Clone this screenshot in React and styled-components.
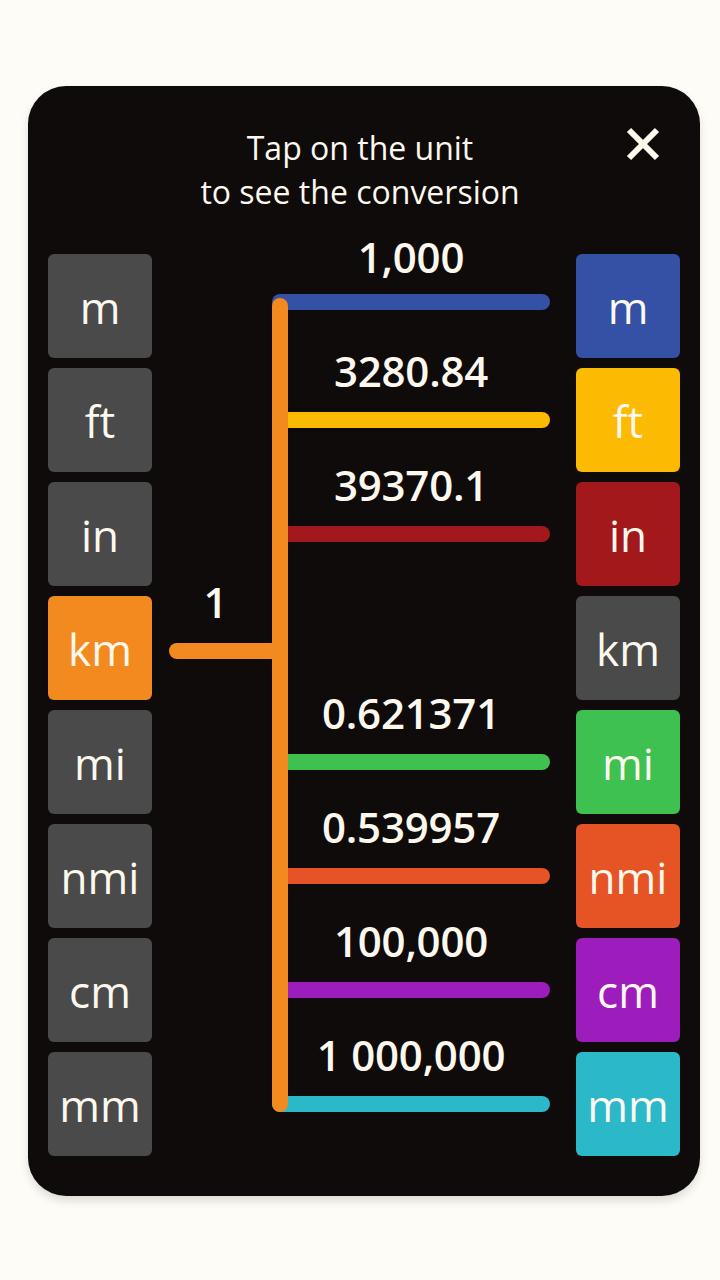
import React from "react";
import styled, { createGlobalStyle } from "styled-components";

const Global = createGlobalStyle`
  html, body { margin: 0; padding: 0; background: #fdfcf7; }
  body { font-family: "Open Sans", "Noto Sans", sans-serif; }
  * { box-sizing: border-box; }
`;

const Page = styled.div`
  width: 720px;
  min-height: 1280px;
  padding: 86px 20px 0 28px;
`;

const Card = styled.div`
  background: #0e0b0a;
  border-radius: 38px;
  padding: 40px 20px 40px;
  box-shadow: 0 5px 8px rgba(0, 0, 0, 0.13);
  color: #fdf8ee;
`;

const Header = styled.div`
  display: grid;
  grid-template-columns: 1fr auto 1fr;
  align-items: start;
  padding-right: 8px;
`;

const Title = styled.div`
  grid-column: 2;
  font-size: 32px;
  line-height: 44px;
  text-align: center;
  font-weight: 400;
`;

const Close = styled.button`
  grid-column: 3;
  justify-self: end;
  margin: 1px 12px 0 0;
  width: 34px;
  height: 34px;
  padding: 0;
  border: 0;
  background: none;
  display: flex;
  cursor: pointer;
`;

const Body = styled.div`
  display: flex;
  align-items: flex-start;
`;

const UnitColumn = styled.div`
  display: flex;
  flex-direction: column;
  gap: 10px;
  padding-top: 40px;
  flex-shrink: 0;
`;

const UnitButton = styled.button`
  width: 104px;
  height: 104px;
  border: 0;
  border-radius: 6px;
  background: ${(p) => p.$bg || "#4a4a4a"};
  color: #fdf8ee;
  font-family: "Open Sans", "Noto Sans", sans-serif;
  font-size: 44px;
  font-weight: 400;
  display: flex;
  align-items: center;
  justify-content: center;
  padding: 1px 0 0;
  cursor: pointer;
`;

const Stub = styled.div`
  width: 103px;
  margin-left: 17px;
  display: flex;
  flex-direction: column;
  flex-shrink: 0;
`;

const Lines = styled.div`
  position: relative;
  width: 278px;
  display: flex;
  flex-direction: column;
  flex-shrink: 0;
`;

const Value = styled.div`
  height: ${(p) => p.$space}px;
  display: flex;
  align-items: flex-end;
  justify-content: center;
  padding-bottom: ${(p) => p.$lift ?? 20}px;
  padding-right: ${(p) => p.$nudge ?? 0}px;
  font-size: 42px;
  line-height: 42px;
  font-weight: 600;
  white-space: nowrap;
  letter-spacing: -0.2px;
`;

const Bar = styled.div`
  height: 16px;
  background: ${(p) => p.$color};
  border-radius: ${(p) => (p.$stub ? "8px 0 0 8px" : "8px")};
`;

const Spine = styled.div`
  position: absolute;
  left: 0;
  top: 84px;
  bottom: 0;
  width: 16px;
  border-radius: 8px;
  background: #f28a1f;
`;

const RightColumn = styled(UnitColumn)`
  margin-left: 26px;
`;

const units = ["m", "ft", "in", "km", "mi", "nmi", "cm", "mm"];
const colors = {
  m: "#3451a5",
  ft: "#fdba02",
  in: "#a3181a",
  km: "#f28a1f",
  mi: "#3ec150",
  nmi: "#e65425",
  cm: "#9c1dbb",
  mm: "#2bb8c8",
};

const values = [
  { unit: "m", value: "1,000", space: 80, lift: 16 },
  { unit: "ft", value: "3280.84", space: 102 },
  { unit: "in", value: "39370.1", space: 98 },
  { unit: "mi", value: "0.621371", space: 212 },
  { unit: "nmi", value: "0.539957", space: 98 },
  { unit: "cm", value: "100,000", space: 98 },
  { unit: "mm", value: "1 000,000", space: 98 },
];

export default function App() {
  return (
    <Page>
      <Global />
      <Card>
        <Header>
          <Title>
            Tap on the unit
            <br />
            to see the conversion
          </Title>
          <Close aria-label="Close">
            <svg width="34" height="34" viewBox="0 0 34 34">
              <path
                d="M3 3 L31 31 M31 3 L3 31"
                stroke="#fdf8ee"
                strokeWidth="6"
                strokeLinecap="butt"
              />
            </svg>
          </Close>
        </Header>
        <Body>
          <UnitColumn>
            {units.map((u) => (
              <UnitButton key={u} $bg={u === "km" ? colors.km : undefined}>
                {u}
              </UnitButton>
            ))}
          </UnitColumn>
          <Stub>
            <Value $space={429} $nudge={10}>1</Value>
            <Bar $color={colors.km} $stub />
          </Stub>
          <Lines>
            {values.map((v) => (
              <React.Fragment key={v.unit}>
                <Value $space={v.space} $lift={v.lift}>
                  {v.value}
                </Value>
                <Bar $color={colors[v.unit]} />
              </React.Fragment>
            ))}
            <Spine />
          </Lines>
          <RightColumn>
            {units.map((u) => (
              <UnitButton key={u} $bg={u === "km" ? undefined : colors[u]}>
                {u}
              </UnitButton>
            ))}
          </RightColumn>
        </Body>
      </Card>
    </Page>
  );
}
